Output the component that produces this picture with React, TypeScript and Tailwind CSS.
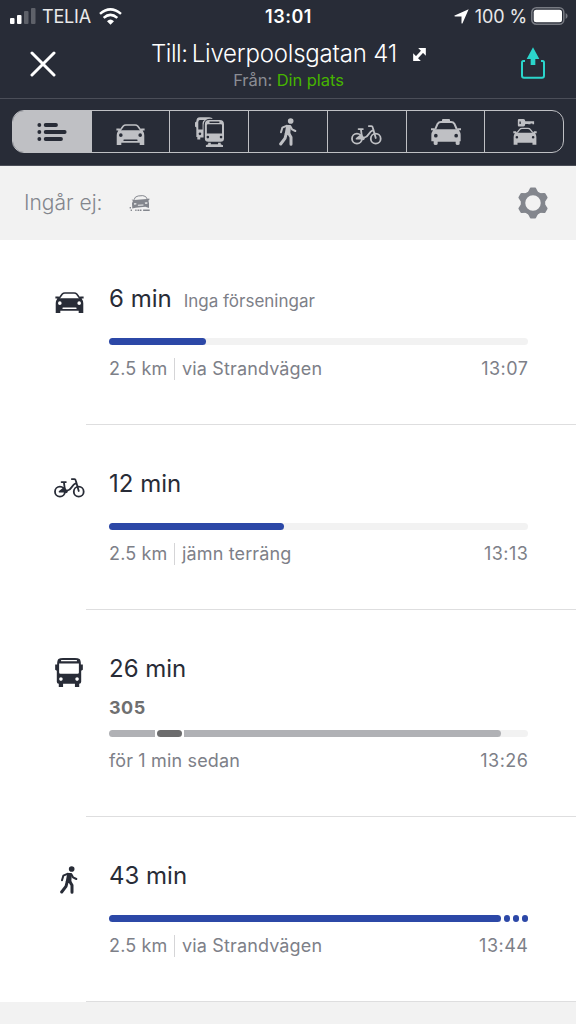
import type { ReactNode } from 'react';
import clsx from 'clsx';

type IconProps = { className?: string };

const CarIcon = ({ className }: IconProps) => (
  <svg viewBox="0 0 86 64" className={className} fill="currentColor">
    <path
      d="M12 18 21 6Q24 3 29 3H57Q62 3 65 6L74 18"
      fill="none"
      stroke="currentColor"
      strokeWidth="5"
    />
    <path
      fillRule="evenodd"
      d="M0 14h10l4 5h58l4-5h10v6h-6q5 7 5 14v30H71v-7H15v7H1V34q0-7 5-14H0zM8 34a5.5 5.5 0 1 0 11 0a5.5 5.5 0 1 0-11 0zM67 34a5.5 5.5 0 1 0 11 0a5.5 5.5 0 1 0-11 0zM24 47q-3 0-3 2.500t3 2.500h38q3 0 3-2.500t-3-2.500z"
    />
  </svg>
);

const BikeIcon = ({ className }: IconProps) => (
  <svg
    viewBox="0 0 94 60"
    className={className}
    fill="none"
    stroke="currentColor"
    strokeWidth="5.500"
    strokeLinecap="round"
    strokeLinejoin="round"
  >
    <circle cx="18" cy="41" r="15" />
    <circle cx="75" cy="41" r="15" />
    <path d="M23 12h13M30 12l3 24M54 3h8q3 0 4 4l9 32M33 38h7Q49 36 54 27T67 15" />
    <path d="M17 41 31 30 37 41z" fill="currentColor" />
    <circle cx="36" cy="40" r="3" fill="currentColor" />
  </svg>
);

const WalkIcon = ({ className }: IconProps) => (
  <svg
    viewBox="0 0 54 84"
    className={className}
    fill="none"
    stroke="currentColor"
    strokeWidth="7.500"
    strokeLinecap="round"
    strokeLinejoin="round"
  >
    <circle cx="35" cy="9" r="8.500" fill="currentColor" stroke="none" />
    <path d="M24 23 10 29 6 43M34 25 39 34 49 39" strokeWidth="6" />
    <path d="M25 25h7l-2 22h-9z" fill="currentColor" />
    <path d="M22 46 18 61 5 78M29 46 36 58V79" strokeWidth="9" />
  </svg>
);

const BusIcon = ({ className }: IconProps) => (
  <svg viewBox="0 0 84 88" className={className} fill="currentColor">
    <path
      fillRule="evenodd"
      d="M6 20Q6 6 10 3Q14 0 24 0H60Q70 0 74 3Q78 6 78 20H84V36L79 39V72Q79 78 73 78V88H60V78H24V88H11V78Q5 78 5 72V39L0 36V20zM18 6v4h48V6zM12 17V44Q12 48 16 48H68Q72 48 72 44V17zM12 64a5.500 5.500 0 1 0 11 0a5.500 5.500 0 1 0-11 0zM61 64a5.500 5.500 0 1 0 11 0a5.500 5.500 0 1 0-11 0z"
    />
  </svg>
);

const TransitIcon = ({ className }: IconProps) => (
  <svg viewBox="0 0 88 91" className={className} fill="currentColor">
    <path
      fillRule="evenodd"
      d="M4 14Q4 1 15 1H43Q52 1 54 6Q40 4 33 9Q26 14 26 24V62H16V68H7V61H4V32L0 29V17zM10 16V38H23V18Q23 12 29 9H14Q10 10 10 16zM11 51a4 4 0 1 0 8 0a4 4 0 1 0-8 0z"
    />
    <path
      fillRule="evenodd"
      d="M30 22Q30 9 43 9H75Q88 9 88 22V65Q88 75 78 75H40Q30 75 30 65zM44 14v4h30v-4zM36 25V50H82V25Q82 22 79 22H39Q36 22 36 25zM35 61a4 4 0 1 0 8 0a4 4 0 1 0-8 0zM75 61a4 4 0 1 0 8 0a4 4 0 1 0-8 0z"
    />
    <path d="M40 78H48V83H70V78H78V83L85 86V91H33V86L40 83z" />
  </svg>
);

const TaxiIcon = ({ className }: IconProps) => (
  <svg viewBox="0 0 90 78" className={className} fill="currentColor">
    <path d="M33 9V3Q33 0 36 0H54Q57 0 57 3V9z" />
    <path
      d="M13 30 20 14Q23 9 30 9H60Q67 9 70 14L77 30"
      fill="none"
      stroke="currentColor"
      strokeWidth="6"
    />
    <path
      fillRule="evenodd"
      d="M0 28h10l4 3h62l4-3h10v6h-6q5 7 5 14v19h-3v7q0 4-6 4t-6-4v-6H20v6q0 4-6 4t-6-4v-7H1V48q0-7 5-14H0zM9 50a5.500 5.500 0 1 0 11 0a5.500 5.500 0 1 0-11 0zM70 50a5.500 5.500 0 1 0 11 0a5.500 5.500 0 1 0-11 0z"
    />
  </svg>
);

const RentalIcon = ({ className }: IconProps) => (
  <svg viewBox="0 0 72 80" className={className} fill="currentColor">
    <path
      fillRule="evenodd"
      d="M17 0H31Q36 0 37 7H64V16H59V14H53V16H46V15H37Q36 23 31 23H17Q14 23 14 20V3Q14 0 17 0zM19 8v7h4V8z"
    />
    <path
      d="M12 42 20 32Q22 29 27 29H45Q50 29 52 32L60 42"
      fill="none"
      stroke="currentColor"
      strokeWidth="4"
    />
    <path
      fillRule="evenodd"
      d="M0 38h8l4 4h48l4-4h8v6h-5q4 5 4 11v24H59v-6H13v6H1V55q0-6 4-11H0zM7 56a4 4 0 1 0 8 0a4 4 0 1 0-8 0zM57 56a4 4 0 1 0 8 0a4 4 0 1 0-8 0z"
    />
  </svg>
);

const ListIcon = ({ className }: IconProps) => (
  <svg
    viewBox="0 0 88 54"
    className={className}
    stroke="currentColor"
    strokeWidth="11.500"
    strokeLinecap="round"
  >
    <path d="M6 6h.1M25 6h31M6 27h.1M25 27h57M6 48h.1M25 48h46" />
  </svg>
);

const UnpavedIcon = ({ className }: IconProps) => (
  <svg viewBox="0 0 64 50" className={className} fill="currentColor">
    <path
      d="M15 14Q18 3 28 2L42 1Q52 1 56 12"
      fill="none"
      stroke="currentColor"
      strokeWidth="3"
    />
    <path
      fillRule="evenodd"
      d="M8 13 16 14 54 11 62 10V14L59 16 61 24V39L50 35 20 38 10 40 9 24 12 17zM15 24l1 5 7-2-1-3zM48 22l1 4 7 0V21zM27 29v3l17-1V28z"
    />
    <path d="M2 36h4v4H2zM5 43h4v5H5zM19 43h4v5H19zM26 43h5v5h-5zM33 43h5v5h-5zM43 43h20v5H43z" />
  </svg>
);

const GearIcon = ({ className }: IconProps) => (
  <svg viewBox="-16 -16 32 32" className={className} fill="currentColor">
    <circle r="10" fill="none" stroke="currentColor" strokeWidth="4.500" />
    {[0, 60, 120, 180, 240, 300].map((angle) => (
      <path
        key={angle}
        transform={`rotate(${angle})`}
        d="M-5.500-10-3.200-14.500Q-3-15.500-2-15.500H2Q3-15.500 3.200-14.500L5.500-10z"
      />
    ))}
  </svg>
);

const ShareIcon = ({ className }: IconProps) => (
  <svg viewBox="0 0 72 96" className={className} fill="currentColor">
    <path d="M36 1 55 36H43V54H29V36H17z" />
    <path
      d="M12 42H7Q3 42 3 47V86Q3 92 9 92H63Q69 92 69 86V47Q69 42 65 42H60"
      fill="none"
      stroke="currentColor"
      strokeWidth="6"
    />
  </svg>
);

const StatusBar = () => (
  <div className="flex h-8 items-center text-[18px] text-white">
    <div className="flex flex-1 items-center pl-[10px]">
      <svg viewBox="0 0 26 16" className="h-4 w-[26px] shrink-0" fill="white">
        <rect y="10" width="4.500" height="6" rx="1" />
        <rect x="7" y="7" width="4.500" height="9" rx="1" />
        <rect x="14" y="3" width="4.500" height="13" rx="1" opacity=".25" />
        <rect x="21" y="0" width="4.500" height="16" rx="1" opacity=".25" />
      </svg>
      <span className="ml-[6px] w-[50px] tracking-[-0.2px] whitespace-nowrap text-white/90">
        TELIA
      </span>
      <svg
        viewBox="0 0 69 50"
        className="ml-[7px] h-[17px] w-[23px] shrink-0"
        fill="none"
        stroke="white"
        strokeWidth="7.500"
      >
        <path d="M3 17Q34-10 66 17M14 29Q34 11 55 29" />
        <path d="M24 39Q34 29 45 39L34.500 50z" fill="white" stroke="none" />
      </svg>
    </div>
    <span className="mr-px font-semibold tracking-[0.5px]">13:01</span>
    <div className="flex flex-1 items-center justify-end pr-[8px]">
      <svg viewBox="0 0 44 44" className="h-[15px] w-[15px]" fill="white">
        <path d="M43 1 25 42Q23 45 22 41V22H4Q-1 22 2 19z" />
      </svg>
      <span className="ml-[6px] tracking-[-0.1px] whitespace-nowrap text-white/90">100 %</span>
      <svg viewBox="0 0 37 18" className="ml-[4px] h-[18px] w-[37px] shrink-0">
        <rect
          x=".8"
          y=".8"
          width="32"
          height="16.400"
          rx="4.500"
          fill="none"
          stroke="#777a82"
          strokeWidth="1.500"
        />
        <rect x="2.700" y="2.800" width="28.300" height="12.400" rx="2.500" fill="white" />
        <path d="M34.600 6q2 1 2 3t-2 3z" fill="#777a82" />
      </svg>
    </div>
  </div>
);

const Header = () => (
  <div className="flex h-[67px] border-b border-[#4b4e58] pr-[31px] pb-px pl-[30px]">
    <svg
      viewBox="0 0 26 26"
      className="mt-[19px] h-[26px] w-[26px]"
      stroke="white"
      strokeWidth="3"
      strokeLinecap="round"
    >
      <path d="m2 2 22 22M24 2 2 24" />
    </svg>
    <div className="flex flex-1 flex-col items-center">
      <div className="mt-[6px] flex h-8 items-center">
        <h1 className="text-[24px] leading-8 font-light tracking-[-0.2px] whitespace-nowrap text-white">
          <span className="tracking-[-0.5px] [word-spacing:-2px]">Till: </span>
          Liverpoolsgatan 41
        </h1>
        <svg viewBox="0 0 38 39" className="ml-4 h-[13px] w-[13px]" fill="white">
          <path d="M38 0V23L15 0zM0 39V16L23 39z" />
          <path d="M10 29 28 10" stroke="white" strokeWidth="9" />
        </svg>
      </div>
      <p className="text-[16.5px] leading-5 tracking-[-0.05px] text-[#8b8d94]">
        Från: <span className="text-[#46b400]">Din plats</span>
      </p>
    </div>
    <ShareIcon className="mt-[15px] h-8 w-6 text-[#2bd5cb]" />
  </div>
);

const tabs = [
  { id: 'all', icon: <ListIcon className="h-[18px] w-[30px]" /> },
  { id: 'car', icon: <CarIcon className="mt-[6px] h-[21px] w-[29px]" /> },
  { id: 'transit', icon: <TransitIcon className="h-[30px] w-[29px]" /> },
  { id: 'walk', icon: <WalkIcon className="h-[28px] w-[18px]" /> },
  { id: 'bike', icon: <BikeIcon className="mt-[6px] h-[20px] w-[31px]" /> },
  { id: 'taxi', icon: <TaxiIcon className="mt-[1px] ml-px h-[26px] w-[30px]" /> },
  { id: 'rental', icon: <RentalIcon className="ml-[2px] h-[26px] w-[24px]" /> },
];

const ModeTabs = () => (
  <div className="h-[67px] border-b border-[#4b4e58] px-3 pt-[11px]">
    <div className="flex h-[43px] overflow-hidden rounded-[12px] border-[1.5px] border-[#bfc0c4]">
      {tabs.map((tab, index) => (
        <button
          key={tab.id}
          className={clsx(
            'flex flex-1 items-center justify-center',
            index > 0 && 'border-l border-[#bfc0c4]',
            index === 0 ? 'bg-[#bfc0c4] text-[#282c37]' : 'text-[#bfc0c4]'
          )}
        >
          {tab.icon}
        </button>
      ))}
    </div>
  </div>
);

type RouteRowProps = {
  icon: ReactNode;
  duration: string;
  note?: string;
  line?: string;
  bar: ReactNode;
  info: string[];
  arrival: string;
};

const RouteRow = ({ icon, duration, note, line, bar, info, arrival }: RouteRowProps) => (
  <div className="flex">
    <div className="flex h-[125px] w-[86px] shrink-0 items-center justify-center pl-[52px]">
      {icon}
    </div>
    <div
      className={clsx(
        'flex-1 border-b border-[#dededf] pt-[43px] pr-12 pl-[23px]',
        line ? 'h-[207px]' : 'h-[185px]'
      )}
    >
      <div className="flex h-8 items-baseline">
        <span className="text-[24px] leading-8 text-[#282c37]">{duration}</span>
        {note && <span className="ml-3 text-[17px] text-[#7d8088]">{note}</span>}
      </div>
      {line && (
        <p className="mt-[11px] -mb-[13px] text-[18px] leading-6 font-bold tracking-[0.5px] text-[#6f6f70]">
          {line}
        </p>
      )}
      <div className="mt-[23px] flex h-[6.500px] rounded-full bg-[#f2f2f2]">{bar}</div>
      <div className="mt-[13px] flex h-[22px] items-center text-[18px] leading-[22px] tracking-[0.15px] text-[#7d8088]">
        {info.map((text, index) => (
          <span
            key={text}
            className={clsx(index > 0 && 'ml-[7px] border-l border-[#d5d5d7] pl-[6.5px]')}
          >
            {text}
          </span>
        ))}
        <span className="-mr-[0.5px] ml-auto tracking-[0.5px]">{arrival}</span>
      </div>
    </div>
  </div>
);

const App = () => {
  return (
    <div className="flex h-screen w-full flex-col overflow-hidden bg-[#f2f2f2] font-['Inter',sans-serif]">
      <header className="h-[166px] shrink-0 bg-[#282c37]">
        <StatusBar />
        <Header />
        <ModeTabs />
      </header>

      <section className="flex h-[74px] shrink-0 items-center pr-[27px] pl-6 text-[#83868d]">
        <span className="w-[79px] text-[21px] font-light whitespace-nowrap">Ingår ej:</span>
        <UnpavedIcon className="ml-[26px] h-[17px] w-[21px]" />
        <GearIcon className="ml-auto h-8 w-8" />
      </section>

      <main className="bg-white">
        <RouteRow
          icon={<CarIcon className="h-[21px] w-[29px] text-[#282c37]" />}
          duration="6 min"
          note="Inga förseningar"
          bar={<div className="w-[97px] rounded-full bg-[#2c48a7]" />}
          info={['2.5 km', 'via Strandvägen']}
          arrival="13:07"
        />
        <RouteRow
          icon={<BikeIcon className="h-[20px] w-[31px] text-[#282c37]" />}
          duration="12 min"
          bar={<div className="w-[175px] rounded-full bg-[#2c48a7]" />}
          info={['2.5 km', 'jämn terräng']}
          arrival="13:13"
        />
        <RouteRow
          icon={<BusIcon className="h-[29px] w-[28px] text-[#282c37]" />}
          duration="26 min"
          line="305"
          bar={
            <>
              <div className="w-[46px] rounded-l-full bg-[#b0b1b5]" />
              <div className="w-[29px] bg-white px-[2px]">
                <div className="h-full rounded-full bg-[#6c6c6d]" />
              </div>
              <div className="w-[317px] rounded-r-full bg-[#b0b1b5]" />
            </>
          }
          info={['för 1 min sedan']}
          arrival="13:26"
        />
        <RouteRow
          icon={<WalkIcon className="h-[28px] w-[18px] text-[#282c37]" />}
          duration="43 min"
          bar={
            <>
              <div className="w-[392px] rounded-full bg-[#2c48a7]" />
              <div className="flex flex-1 justify-between bg-white pl-[2.500px]">
                <i className="w-[6.500px] rounded-full bg-[#2c48a7]" />
                <i className="w-[6.500px] rounded-full bg-[#2c48a7]" />
                <i className="w-[6.500px] rounded-full bg-[#2c48a7]" />
              </div>
            </>
          }
          info={['2.5 km', 'via Strandvägen']}
          arrival="13:44"
        />
      </main>
    </div>
  );
};

export default App;
